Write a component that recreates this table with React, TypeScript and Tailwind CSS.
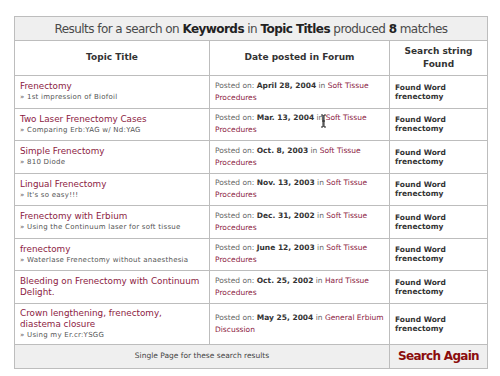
const results = [
  { title: 'Frenectomy', sub: '1st impression of Biofoil', date: 'April 28, 2004', forum: 'Soft Tissue Procedures' },
  { title: 'Two Laser Frenectomy Cases', sub: 'Comparing Erb:YAG w/ Nd:YAG', date: 'Mar. 13, 2004', forum: 'Soft Tissue Procedures', cursor: true },
  { title: 'Simple Frenectomy', sub: '810 Diode', date: 'Oct. 8, 2003', forum: 'Soft Tissue Procedures' },
  { title: 'Lingual Frenectomy', sub: "It's so easy!!!", date: 'Nov. 13, 2003', forum: 'Soft Tissue Procedures' },
  { title: 'Frenectomy with Erbium', sub: 'Using the Continuum laser for soft tissue', date: 'Dec. 31, 2002', forum: 'Soft Tissue Procedures' },
  { title: 'frenectomy', sub: 'Waterlase Frenectomy without anaesthesia', date: 'June 12, 2003', forum: 'Soft Tissue Procedures' },
  { title: 'Bleeding on Frenectomy with Continuum Delight.', date: 'Oct. 25, 2002', forum: 'Hard Tissue Procedures' },
  { title: 'Crown lengthening, frenectomy,\ndiastema closure', sub: 'Using my Er.cr:YSGG', date: 'May 25, 2004', forum: 'General Erbium Discussion', tall: true },
];

// text cursor caught in the screenshot
function IBeam() {
  return (
    <svg className="absolute left-[105px] top-[2px]" width="7" height="14" viewBox="0 0 7 14">
      <path d="M1 1h2v12H1M6 1H4v12h2M2 7h3" fill="none" stroke="#222" strokeWidth="1" />
    </svg>
  );
}

export default function App() {
  return (
    <div className="w-[500px] h-[376px] bg-white pt-[16px] pl-[14px] font-['DejaVu_Sans',Verdana,sans-serif] text-[#333]">
      <table className="w-[473px] border-collapse border border-[#bdbdbd] table-fixed">
        <colgroup>
          <col className="w-[195px]" />
          <col className="w-[180px]" />
          <col className="w-[98px]" />
        </colgroup>
        <thead>
          <tr className="h-[24px] bg-[#efefef]">
            <th colSpan={3} className="border border-[#bdbdbd] text-[12px] font-normal text-[#4a4a4a] tracking-[-0.55px]">
              Results for a search on <b className="text-[#222]">Keywords</b> in <b className="text-[#222]">Topic Titles</b> produced <b className="text-[#222]">8</b> matches
            </th>
          </tr>
          <tr className="h-[35px]">
            <th className="border border-[#bdbdbd] text-[9px] font-bold text-[#333]">Topic Title</th>
            <th className="border border-[#bdbdbd] text-[9px] font-bold text-[#333]">Date posted in Forum</th>
            <th className="border border-[#bdbdbd] text-[9px] font-bold text-[#333] leading-[13px]">Search string<br />Found</th>
          </tr>
        </thead>
        <tbody>
          {results.map((r, i) => (
            <tr key={i} className={r.tall ? 'h-[41px]' : 'h-[32.5px]'}>
              <td className="border border-[#bdbdbd] pl-[5px] pr-[3px] align-middle">
                <div className="text-[8.8px] leading-[11px] text-[#8c1b3f] whitespace-pre-line">{r.title}</div>
                {r.sub && <div className="text-[7px] leading-[10px] text-[#555] tracking-[0.25px]">» {r.sub}</div>}
              </td>
              <td className="border border-[#bdbdbd] px-[5px] align-middle">
                <div className="relative text-[7.5px] leading-[12px] text-[#666]">
                  Posted on: <b className="text-[#333]">{r.date}</b> in{' '}
                  <span className="text-[#8c1b3f]">{r.forum}</span>
                  {r.cursor && <IBeam />}
                </div>
              </td>
              <td className="border border-[#bdbdbd] px-[5px] align-middle">
                <div className="text-[7.5px] leading-[9px] font-bold text-[#333]">
                  Found Word
                  <br />
                  frenectomy
                </div>
              </td>
            </tr>
          ))}
        </tbody>
        <tfoot>
          <tr className="h-[24px] bg-[#efefef]">
            <td colSpan={2} className="border border-[#bdbdbd] text-center text-[7.5px] text-[#444]">
              Single Page for these search results
            </td>
            <td className="border border-[#bdbdbd] text-center text-[12px] font-bold text-[#8b0d0d] tracking-[-0.7px]">
              Search Again
            </td>
          </tr>
        </tfoot>
      </table>
    </div>
  );
}
